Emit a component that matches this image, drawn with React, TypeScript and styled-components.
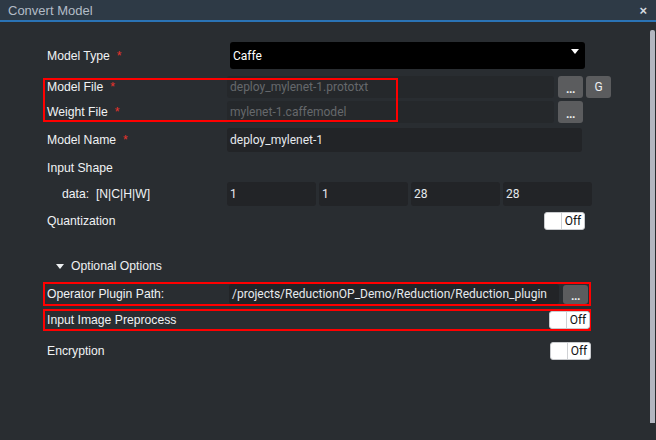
import React from 'react';
import styled, { createGlobalStyle } from 'styled-components';

const GlobalStyle = createGlobalStyle`
  html, body {
    margin: 0;
    padding: 0;
    background: #292d31;
  }
  * { box-sizing: border-box; }
`;

const Window = styled.div`
  width: 656px;
  height: 440px;
  background: #292d31;
  display: flex;
  flex-direction: column;
  font-family: 'Liberation Sans', Arial, sans-serif;
  overflow: hidden;
`;

const TitleBar = styled.div`
  height: 22px;
  flex: none;
  background: #2e3a46;
  border-bottom: 2px solid #2a73b5;
  display: flex;
  align-items: center;
  justify-content: space-between;
  padding: 0 9px 0 8px;
`;

const Title = styled.span`
  font-size: 13px;
  color: #b3bcc6;
`;

const Close = styled.span`
  font-size: 13px;
  font-weight: bold;
  color: #d6dbe0;
`;

const Body = styled.div`
  flex: 1;
  display: flex;
`;

const Form = styled.div`
  position: relative;
  flex: 1;
  padding: 20px 0 0 47px;
  display: flex;
  flex-direction: column;
`;

const ScrollTrack = styled.div`
  width: 8px;
  flex: none;
  padding: 8px 1px 17px 2px;
  display: flex;
`;

const ScrollThumb = styled.div`
  flex: 1;
  background: #b3b6c0;
  border-radius: 2px 2px 0 0;
`;

const Row = styled.div<{ h: number; mt?: number }>`
  display: flex;
  align-items: center;
  height: ${p => p.h}px;
  margin-top: ${p => p.mt ?? 0}px;
`;

const Label = styled.div<{ w?: number; indent?: number }>`
  width: ${p => p.w ?? 180}px;
  flex: none;
  padding-left: ${p => p.indent ?? 0}px;
  font-size: 12.2px;
  color: #f0f2f4;
  white-space: nowrap;
`;

const Star = styled.span`
  color: #e8332c;
  margin-left: 7px;
`;

const Select = styled.div`
  width: 355px;
  height: 27px;
  margin-left: 3px;
  background: #000;
  border-radius: 3px;
  display: flex;
  align-items: center;
  justify-content: space-between;
  padding: 0 6px 0 3px;
  font-family: Roboto, sans-serif;
  font-size: 12px;
  color: #fff;
`;

const Caret = styled.span`
  width: 0;
  height: 0;
  border-left: 4px solid transparent;
  border-right: 4px solid transparent;
  border-top: 5px solid #fff;
  align-self: flex-start;
  margin-top: 7px;
`;

const Field = styled.div<{ w: number; dim?: boolean; h?: number; bg?: string }>`
  width: ${p => p.w}px;
  height: ${p => p.h ?? 22}px;
  flex: none;
  background: ${p => p.bg ?? '#25282b'};
  border-radius: 3px;
  display: flex;
  align-items: center;
  padding-left: 3px;
  font-family: Roboto, sans-serif;
  font-size: 12px;
  color: ${p => (p.dim ? '#65686c' : '#e6eaee')};
  white-space: nowrap;
  overflow: hidden;
`;

const Btn = styled.div<{ ml?: number; h?: number }>`
  width: 25px;
  height: ${p => p.h ?? 22}px;
  flex: none;
  margin-left: ${p => p.ml ?? 3}px;
  background: #5b5c5e;
  border-radius: 3px;
  display: flex;
  align-items: center;
  justify-content: center;
  font-family: Roboto, sans-serif;
  font-size: 12px;
  color: #eef0f2;
`;

const Dots = styled.span`
  font-weight: bold;
  letter-spacing: -0.5px;
  margin-top: 4px;
`;

const ShapeInputs = styled.div`
  display: flex;
  gap: 3px;
`;

const Toggle = styled.div<{ ml: number }>`
  margin-left: ${p => p.ml}px;
  width: 41px;
  height: 18px;
  flex: none;
  display: flex;
  background: #fff;
  border: 1px solid #c9cbce;
  border-radius: 3px;
  overflow: hidden;
`;

const Knob = styled.div`
  width: 17px;
  border-right: 1px solid #cfd1d4;
`;

const ToggleText = styled.div`
  flex: 1;
  display: flex;
  align-items: center;
  justify-content: center;
  font-family: Roboto, sans-serif;
  font-size: 12px;
  color: #111;
`;

const Section = styled.div`
  display: flex;
  align-items: center;
  gap: 7px;
  padding-left: 9px;
  font-size: 12.2px;
  color: #eef0f2;
`;

const Arrow = styled.span`
  width: 0;
  height: 0;
  border-left: 4px solid transparent;
  border-right: 4px solid transparent;
  border-top: 5px solid #eef0f2;
`;

const Boxed = styled.div<{ h: number; w: number; mt: number }>`
  margin-left: -4px;
  margin-top: ${p => p.mt}px;
  width: ${p => p.w}px;
  height: ${p => p.h}px;
  border: 2px solid #ff0000;
  display: flex;
  align-items: center;
  padding-left: 2px;
`;

const Highlight = styled.div`
  position: absolute;
  left: 43px;
  top: 56px;
  width: 355px;
  height: 44px;
  border: 2px solid #ff0000;
  pointer-events: none;
`;

const Toggler = ({ ml }: { ml: number }) => (
  <Toggle ml={ml}>
    <Knob />
    <ToggleText>Off</ToggleText>
  </Toggle>
);

export default function App() {
  return (
    <>
      <GlobalStyle />
      <Window>
        <TitleBar>
          <Title>Convert Model</Title>
          <Close>×</Close>
        </TitleBar>
        <Body>
          <Form>
            <Row h={27}>
              <Label>Model Type<Star>*</Star></Label>
              <Select>
                Caffe
                <Caret />
              </Select>
            </Row>
            <Row h={22} mt={7}>
              <Label>Model File<Star>*</Star></Label>
              <Field w={327} dim>deploy_mylenet-1.prototxt</Field>
              <Btn ml={4}><Dots>...</Dots></Btn>
              <Btn>G</Btn>
            </Row>
            <Row h={22} mt={3}>
              <Label>Weight File<Star>*</Star></Label>
              <Field w={327} dim>mylenet-1.caffemodel</Field>
              <Btn ml={4}><Dots>...</Dots></Btn>
            </Row>
            <Row h={24} mt={5}>
              <Label>Model Name<Star>*</Star></Label>
              <Field w={355} h={24} bg="#222427">deploy_mylenet-1</Field>
            </Row>
            <Row h={24} mt={4}>
              <Label>Input Shape</Label>
            </Row>
            <Row h={24} mt={2}>
              <Label indent={15}>data:&nbsp;&nbsp;[N|C|H|W]</Label>
              <ShapeInputs>
                {['1', '1', '28', '28'].map((v, i) => (
                  <Field key={i} w={89} h={24} bg="#222427">{v}</Field>
                ))}
              </ShapeInputs>
            </Row>
            <Row h={22} mt={4}>
              <Label>Quantization</Label>
              <Toggler ml={317} />
            </Row>
            <Row h={22} mt={23}>
              <Section>
                <Arrow />
                Optional Options
              </Section>
            </Row>
            <Boxed h={24} w={548} mt={5}>
              <Label w={182}>Operator Plugin Path:</Label>
              <Field w={330} h={20} bg="#222427">/projects/ReductionOP_Demo/Reduction/Reduction_plugin</Field>
              <Btn ml={4} h={19}><Dots>...</Dots></Btn>
            </Boxed>
            <Boxed h={22} w={548} mt={3}>
              <Label w={502}>Input Image Preprocess</Label>
              <Toggler ml={0} />
            </Boxed>
            <Row h={22} mt={9}>
              <Label>Encryption</Label>
              <Toggler ml={323} />
            </Row>
            <Highlight />
          </Form>
          <ScrollTrack>
            <ScrollThumb />
          </ScrollTrack>
        </Body>
      </Window>
    </>
  );
}
